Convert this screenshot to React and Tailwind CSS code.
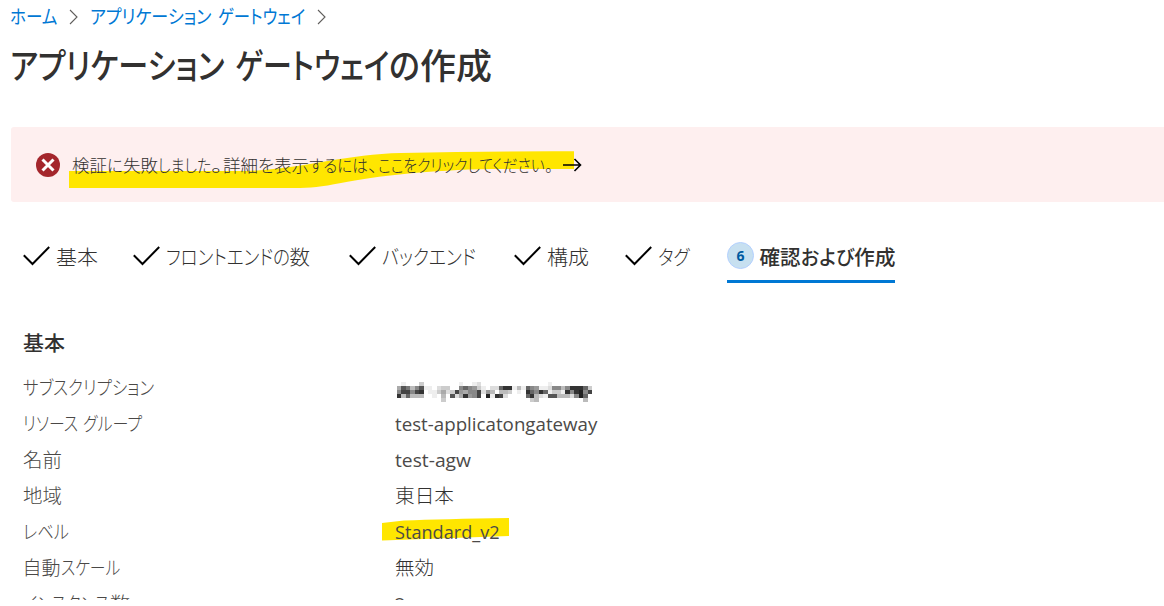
import { useLayoutEffect, useRef } from "react";

// One run of text, condensed or widened to the given advance width.
function Run({ w, children }) {
  const inner = useRef(null);
  useLayoutEffect(() => {
    const natural = inner.current.offsetWidth;
    inner.current.style.transform = `scaleX(${w / natural})`;
  }, [w, children]);
  return (
    <span className="inline-block align-top whitespace-pre" style={{ width: w }}>
      <span ref={inner} className="inline-block origin-left whitespace-pre">{children}</span>
    </span>
  );
}

function Text({ runs, className = "" }) {
  return (
    <span className={"flex whitespace-nowrap " + className}>
      {runs.map(([t, w], i) => <Run key={i} w={w}>{t}</Run>)}
    </span>
  );
}

function Chevron() {
  return (
    <svg width="9" height="16" viewBox="0 0 9 16" fill="none" stroke="#605e5c" strokeWidth="1.1">
      <path d="M1 1l7 7-7 7" />
    </svg>
  );
}

function Check() {
  return (
    <svg className="mt-[5px] shrink-0" width="27" height="20" viewBox="0 0 27 20" fill="none" stroke="#000" strokeWidth="2">
      <path d="M.8 9.3l8.7 8.7L26.2 1" />
    </svg>
  );
}

// Grey levels (one hex digit per block) of the pixelated subscription name.
const mosaic = [
  "fefffcffffffffeffedfffffffffffffffefffffffff",
  "a57b85eefdccff8689cefdd633ebe689eed88b83336c",
  "844843feecadc49a884d9bfbbcfef36836ecce383284",
  "3b6bbbffefbf5da3984f2e34dffff63bde55bbbd826f",
  "ffffffffffcfffffffffffffffffffcbffffffffffbf",
];

function Mosaic() {
  return (
    <svg className="mt-[12px] ml-[2px]" width="195" height="20" viewBox="0 0 44 5" preserveAspectRatio="none" shapeRendering="crispEdges">
      {mosaic.flatMap((row, y) =>
        [...row].map((c, x) =>
          c === "f" ? null : <rect key={`${x}-${y}`} x={x} y={y} width="1" height="1" fill={`#${c}${c}${c}`} />
        )
      )}
    </svg>
  );
}

const tabs = [
  { runs: [["基本", 42]], w: 110 },
  { runs: [["フロントエンドの", 124], ["数", 21]], w: 216 },
  { runs: [["バックエンド", 94]], w: 165 },
  { runs: [["構成", 42]], w: 111 },
  { runs: [["タグ", 32]], w: 102 },
];

const labels = [
  [["サブスクリプション", 131]],
  [["リソース", 55], [" ", 5], ["グループ", 59]],
  [["名前", 39]],
  [["地域", 39]],
  [["レベル", 46]],
  [["自動", 38], ["スケール", 59]],
  [["インスタンス", 87], ["数", 20]],
];

const values = [
  null,
  [["test-applicatongateway", 202]],
  [["test-agw", 76]],
  [["東日本", 59]],
  [["Standard_v2", 105]],
  [["無効", 39]],
  [["2", 11]],
];

export default function App() {
  return (
    <div className="h-[606px] w-[1164px] overflow-hidden bg-white font-['Open_Sans','Noto_Sans_CJK_JP',sans-serif] font-light text-[#323130] [font-feature-settings:'palt']">
      <div className="h-[600px] overflow-hidden">
        <nav className="flex h-[34px] items-center pl-[10px] text-[19px] leading-[34px] font-normal text-[#0078d4]">
          <Text className="mr-[12px]" runs={[["ホーム", 47]]} />
          <Chevron />
          <Text className="mr-[12px] ml-[12px]" runs={[["アプリケーション", 121], [" ", 7], ["ゲートウェイ", 87]]} />
          <Chevron />
        </nav>
        <h1 className="h-[93px] pt-[7px] pl-[10px] text-[35px] leading-[50px] font-medium">
          <Text runs={[["アプリケーション", 214], [" ", 11], ["ゲートウェイ", 154], ["の", 31], ["作成", 72]]} />
        </h1>
        <div className="relative ml-[11px] flex h-[75px] items-center rounded-l-[3px] bg-[#feefef] pl-[25px]">
          <svg className="absolute top-0 left-0" width="600" height="75" viewBox="0 0 600 75">
            <path d="M58 44L235 44C292 42 335 27 390 26Q480 24 563 24.300V42L480 42C420 43 365 49 330 56C310 60 300 61 283 61H58Z" fill="#ffe600" />
          </svg>
          <svg className="relative" width="24" height="24" viewBox="0 0 24 24">
            <circle cx="12" cy="12" r="12" fill="#a4262c" />
            <path d="M6.500 6.500l11 11m0-11l-11 11" stroke="#fff" strokeWidth="3" />
          </svg>
          <Text
            className="relative ml-[12px] pt-px text-[17.500px] leading-[30px]"
            runs={[["検証", 35], ["に", 16], ["失敗", 35], ["しました", 53], ["。", 12], ["詳細", 35], ["を", 16], ["表示", 35], ["するには", 59], ["、", 10], ["ここをクリックしてください", 167], ["。", 8]]}
          />
          <svg className="relative ml-[10px]" width="19" height="14" viewBox="0 0 19 14" fill="none" stroke="#000" strokeWidth="1.600">
            <path d="M0 7h17.500M11.500 1l6 6-6 6" />
          </svg>
        </div>
        <div className="flex h-[81px] pt-[39px] pl-[23px] text-[20.500px] leading-[32px]">
          {tabs.map((t, i) => (
            <div key={i} className="flex shrink-0 items-start" style={{ width: t.w }}>
              <Check />
              <Text className="ml-[5.500px]" runs={t.runs} />
            </div>
          ))}
          <div className="flex h-[42px] w-[168px] items-start border-b-[3px] border-[#0078d4] font-medium">
            <span className="mt-px flex size-[27px] items-center justify-center rounded-full border border-[#b3d0ff] bg-[#c7e0f0] text-[14px] leading-none font-bold text-[#005ba1]">6</span>
            <Text className="ml-[5.500px]" runs={[["確認", 41], ["および", 53], ["作成", 41.5]]} />
          </div>
        </div>
        <h2 className="mt-[44px] h-[43px] pl-[22.500px] text-[20.500px] leading-[32px] font-medium">
          <Text runs={[["基本", 42]]} />
        </h2>
        <dl className="text-[19px] leading-[36px]">
          {labels.map((l, i) => (
            <div key={i} className="flex h-[36px] pl-[22.500px]">
              <dt className="w-[372px] text-[#4a4846]"><Text runs={l} /></dt>
              <dd className="relative">
                {i === 4 && (
                  <svg className="absolute top-[4px] -left-[12.500px]" width="127" height="23" viewBox="0 0 127 23">
                    <path d="M0 5L22 2.500Q60 1 127 0V18L0 22.500Z" fill="#ffe600" />
                  </svg>
                )}
                {values[i] ? (
                  <Text
                    className={"relative " + (/^[\x20-\x7e]+$/.test(values[i][0][0]) ? "font-['Open_Sans',sans-serif] text-[19px] font-normal text-[#4c4a48]" : "")}
                    runs={values[i]}
                  />
                ) : (
                  <Mosaic />
                )}
              </dd>
            </div>
          ))}
        </dl>
      </div>
    </div>
  );
}
